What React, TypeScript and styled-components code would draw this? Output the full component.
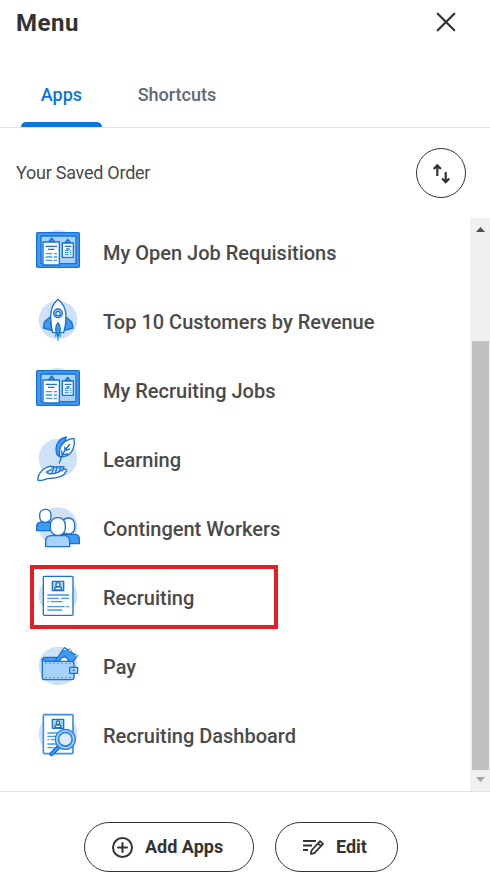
import React from "react";
import styled, { createGlobalStyle } from "styled-components";

const Global = createGlobalStyle`
  *, *::before, *::after { box-sizing: border-box; }
  body { margin: 0; background: #fff; font-family: Roboto, "Liberation Sans", sans-serif; color: #333; }
  button { font: inherit; color: inherit; background: none; border: 0; padding: 0; }
`;

const Panel = styled.main`
  display: flex;
  flex-direction: column;
  width: 490px;
  height: 882px;
  overflow: hidden;
  background: #fff;
`;
const Header = styled.header`
  display: flex;
  justify-content: space-between;
  align-items: center;
  height: 46px;
  padding: 0 34px 2px 16px;
`;
const Title = styled.h1`
  margin: 2px 0 0;
  font-size: 24px;
  line-height: 28px;
  font-weight: 700;
  letter-spacing: 0.5px;
`;
const CloseButton = styled.button`
  display: flex;
`;
const Tabs = styled.nav`
  display: flex;
  gap: 16px;
  height: 82px;
  padding: 18px 0 0 21px;
  border-bottom: 1px solid #dfe2e6;
`;
const Tab = styled.button<{ $active?: boolean }>`
  display: flex;
  flex-direction: column;
  justify-content: space-between;
  padding: 20px 19.8px 0;
  font-size: 18px;
  line-height: 22px;
  font-weight: 500;
  color: ${(p) => (p.$active ? "#0875e1" : "#5e6a75")};
  &::after {
    content: "";
    align-self: stretch;
    height: 5px;
    margin: 0 -19.8px;
    border-radius: 5px 5px 0 0;
    background: ${(p) => (p.$active ? "#0875e1" : "transparent")};
  }
`;
const OrderBar = styled.div`
  display: flex;
  align-items: center;
  justify-content: space-between;
  height: 90px;
  padding: 0 24px 0 16px;
  font-size: 18px;
  color: #494949;
`;
const OrderLabel = styled.span`
  padding-bottom: 2px;
  letter-spacing: -0.25px;
`;
const SortButton = styled.button`
  display: flex;
  align-items: center;
  justify-content: center;
  width: 50px;
  height: 50px;
  border: 1px solid #333;
  border-radius: 50%;
`;
const Body = styled.section`
  display: flex;
  height: 573px;
`;
const List = styled.ul`
  flex: 1;
  margin: 0;
  padding: 0;
  list-style: none;
`;
const Item = styled.li<{ $marked?: boolean }>`
  position: relative;
  display: flex;
  align-items: center;
  gap: 8px;
  height: 69px;
  padding-left: 25px;
  font-size: 20px;
  font-weight: 480;
  color: #4a4a4a;
  &::after {
    content: "";
    display: ${(p) => (p.$marked ? "block" : "none")};
    position: absolute;
    left: 30px;
    top: 2px;
    width: 248px;
    height: 64px;
    border: 4px solid #e61e23;
  }
`;
const Scrollbar = styled.div`
  display: flex;
  flex-direction: column;
  align-items: center;
  width: 20px;
  background: #f0f0f0;
`;
const ScrollArrow = styled.svg`
  flex: none;
  display: block;
`;
const Thumb = styled.div`
  width: 17px;
  height: 429px;
  margin-top: 103px;
  background: #c1c1c1;
`;
const Footer = styled.footer`
  display: flex;
  flex: 1;
  justify-content: center;
  align-items: flex-start;
  gap: 21px;
  padding: 30px 8px 0 0;
  border-top: 1px solid #dfe2e6;
`;
const PillButton = styled.button<{ $width: number }>`
  display: flex;
  align-items: center;
  gap: 11px;
  width: ${(p) => p.$width}px;
  height: 50px;
  padding-left: 26px;
  border: 1px solid #333;
  border-radius: 25px;
  font-size: 18px;
  font-weight: 700;
`;
const PillLabel = styled.span`
  padding-bottom: 2px;
`;

const BLUE = "#1971d2";
const MID = "#409bf4";
const LIGHT = "#a6d2ff";
const HALO = "#cfe1f7";

type IconName = "board" | "rocket" | "learning" | "people" | "resume" | "wallet" | "search";

const ORIGIN: Record<IconName, number> = {
  board: -6, rocket: -9, learning: -15, people: -18, resume: 9, wallet: -18, search: -12,
};

const art: Record<IconName, React.ReactNode> = {
  board: (
    <>
      <circle cx="99" cy="88" r="58" fill={HALO} stroke="none" />
      <rect x="35" y="38" width="128" height="104" rx="3" fill={MID} />
      <rect x="48" y="48" width="105" height="83" rx="2" fill={LIGHT} />
      <path d="M71 66l9-12 9 12zM120 69l8-11 9 11z" fill={MID} />
      <path d="M54 66h49v69H54zM112 69h33v43h-33z" fill="#fff" />
      <path d="M62 79h34M69 88h19M119 79h20M124 87h10" />
      <path d="M62 101h20M87 101h9M62 111h20M87 111h9M62 121h20M87 121h9M119 92h12M135 92h4M119 98h12M135 98h4M119 104h12M135 104h4" stroke={MID} />
    </>
  ),
  rocket: (
    <>
      <circle cx="99" cy="90" r="58" fill={HALO} stroke="none" />
      <path d="M78 79L58 96l-3 18 24 7zM120 79l20 17 4 18-25 7z" fill={MID} />
      <path d="M99 28c-14 12-22 28-22 51 0 18 2 34 6 49h33c5-15 7-31 7-49 0-23-9-39-24-51z" fill="#fff" />
      <circle cx="99" cy="70" r="13" fill={LIGHT} />
      <path d="M93 77v-7c0-8 12-8 12 0v7z" fill="#fff" />
      <path d="M99 98c-8 9-9 25 0 43 9-18 8-34 0-43z" fill={MID} />
      <path d="M99 139v13M92 132v9M106 132v9" stroke={MID} />
    </>
  ),
  learning: (
    <>
      <circle cx="99" cy="84" r="58" fill={HALO} stroke="none" />
      <path d="M124 21c-25 5-36 27-28 53l6 5z" fill={MID} />
      <path d="M147 25c-30 4-47 22-43 55 29 3 48-19 43-55z" fill="#fff" />
      <path d="M103 100c4-20 16-40 32-58M111 75l-1-14M112 75l18-3M120 62l-1-12M121 61l14-4" fill="none" />
      <path d="M39 151c-3-16 14-38 36-42 7-1 10 5 5 9l-16 8c10 12 35 3 47-6 7-6 15-2 13 3-7 16-28 22-49 22-12 0-17 6-27 6z" fill="#fff" />
      <path d="M79 111l8-1-6 20M87 112l10-2-6 19M98 111l10-1-7 17M108 110l9 1-7 13" fill={LIGHT} />
    </>
  ),
  people: (
    <>
      <circle cx="99" cy="80" r="58" fill={HALO} stroke="none" />
      <path d="M35 92V80c0-8 5-13 12-13h30c8 0 12 5 12 13v12z" fill={MID} />
      <rect x="44" y="28" width="34" height="39" rx="16" fill="#fff" />
      <path d="M104 131v-15c0-8 5-13 13-13h30c10 0 16 6 16 13v15z" fill={MID} />
      <rect x="111" y="54" width="38" height="48" rx="18" fill="#fff" />
      <path d="M62 140v-16c0-11 6-17 17-17h38c11 0 17 6 17 17v16z" fill={LIGHT} />
      <rect x="76" y="53" width="45" height="53" rx="21" fill="#fff" />
    </>
  ),
  resume: (
    <>
      <circle cx="99" cy="107" r="58" fill={HALO} stroke="none" />
      <rect x="55" y="49" width="89" height="117" rx="3" fill="#fff" />
      <rect x="82" y="64" width="34" height="28" fill={LIGHT} />
      <circle cx="99" cy="74" r="6" fill="#fff" />
      <path d="M89 90v-4q0-5 6-5h8q6 0 6 5v4z" fill="#fff" />
      <path d="M67 105h65M67 115h34M108 115h24M67 125h4M77 125h36M67 140h52M124 140h8M67 150h45" stroke={MID} />
    </>
  ),
  wallet: (
    <>
      <circle cx="99" cy="84" r="58" fill={HALO} stroke="none" />
      <path d="M53 71c-3-8 1-13 7-13h36v13z" fill={MID} />
      <path d="M89 72l29-43 38 25-14 20z" fill={MID} />
      <path d="M114 35l4-5 7 5-4 5zM129 37l3-5 7 5-4 5zM148 54l4-6 5 4-4 6z" fill="#fff" strokeWidth="2.5" />
      <path d="M105 71c0-18 25-18 25 0z" fill="#fff" />
      <path d="M52 63q2 7 8 7h79q8 0 8 7v41q0 7-7 7H58q-6 0-6-6z" fill={LIGHT} />
      <path d="M60 76h83M60 119h83" strokeWidth="3" strokeDasharray="6 6" stroke={MID} />
      <rect x="134" y="88" width="24" height="18" rx="2" fill={LIGHT} />
      <circle cx="146" cy="97" r="1" />
    </>
  ),
  search: (
    <>
      <circle cx="99" cy="87" r="58" fill={HALO} stroke="none" />
      <rect x="55" y="29" width="89" height="117" rx="4" fill="#fff" stroke="#3d8fe6" strokeWidth="5" />
      <rect x="82" y="43" width="34" height="27" fill={LIGHT} />
      <circle cx="99" cy="53" r="5" fill="#fff" />
      <path d="M89 68l3-8h14l3 8z" fill="#fff" />
      <path d="M67 84h30M67 94h24M67 104h5M77 104h12M67 117h28M67 128h22" stroke={MID} />
      <path d="M99 121l7 7-24 23c-4 3-9-2-6-6z" fill={MID} />
      <circle cx="121" cy="103" r="25" fill="#dceaff" stroke="#2c80de" strokeWidth="14" />
      <circle cx="121" cy="103" r="25.5" fill="none" stroke={LIGHT} strokeWidth="5" />
    </>
  ),
};

const AppIcon = ({ name }: { name: IconName }) => (
  <svg width="70" height="69" viewBox={`0 ${ORIGIN[name]} 210 207`} stroke={BLUE} strokeWidth="4" strokeLinejoin="round" aria-hidden="true">
    {art[name]}
  </svg>
);

const apps: { label: string; icon: IconName; marked?: boolean }[] = [
  { label: "My Open Job Requisitions", icon: "board" },
  { label: "Top 10 Customers by Revenue", icon: "rocket" },
  { label: "My Recruiting Jobs", icon: "board" },
  { label: "Learning", icon: "learning" },
  { label: "Contingent Workers", icon: "people" },
  { label: "Recruiting", icon: "resume", marked: true },
  { label: "Pay", icon: "wallet" },
  { label: "Recruiting Dashboard", icon: "search" },
];

export default function App() {
  return (
    <>
      <Global />
      <Panel>
        <Header>
          <Title>Menu</Title>
          <CloseButton aria-label="Close">
            <svg width="20" height="20" viewBox="0 0 20 20" stroke="#333" strokeWidth="2.2" strokeLinecap="round">
              <path d="M1.7 1.7l16.6 16.6M18.3 1.7L1.7 18.3" />
            </svg>
          </CloseButton>
        </Header>
        <Tabs>
          <Tab $active>Apps</Tab>
          <Tab>Shortcuts</Tab>
        </Tabs>
        <OrderBar>
          <OrderLabel>Your Saved Order</OrderLabel>
          <SortButton aria-label="Sort">
            <svg width="20" height="22" viewBox="0 0 20 22" fill="none" stroke="#333" strokeWidth="2.2">
              <path d="M6.3 14V3.5M2.7 7l3.6-3.6L9.9 7M14.7 10v9.5M11.1 16.5l3.6 3.6 3.6-3.6" />
            </svg>
          </SortButton>
        </OrderBar>
        <Body>
          <List>
            {apps.map((app) => (
              <Item key={app.label} $marked={app.marked}>
                <AppIcon name={app.icon} />
                <span>{app.label}</span>
              </Item>
            ))}
          </List>
          <Scrollbar>
            <ScrollArrow width="20" height="20"><path d="M6 14l4.5-5 4.5 5z" fill="#505050" /></ScrollArrow>
            <Thumb />
            <ScrollArrow width="20" height="20"><path d="M6 7l4.5 5L15 7z" fill="#a3a3a3" /></ScrollArrow>
          </Scrollbar>
        </Body>
        <Footer>
          <PillButton $width={170}>
            <svg width="23" height="23" viewBox="0 0 23 23" fill="none" stroke="#333" strokeWidth="2" strokeLinecap="round">
              <circle cx="11.5" cy="11.5" r="9.5" />
              <path d="M11.5 7v9M7 11.5h9" />
            </svg>
            <PillLabel>Add Apps</PillLabel>
          </PillButton>
          <PillButton $width={123}>
            <svg width="23" height="20" viewBox="0 0 23 20" fill="none" stroke="#333" strokeWidth="1.8" strokeLinejoin="round">
              <path d="M1 4h13M1 8.5h9M1 13h5M9.5 13.5L18 4.2l3 2.7-8.6 9.2-3.5.7zM16 6.4l3 2.7" />
            </svg>
            <PillLabel>Edit</PillLabel>
          </PillButton>
        </Footer>
      </Panel>
    </>
  );
}
